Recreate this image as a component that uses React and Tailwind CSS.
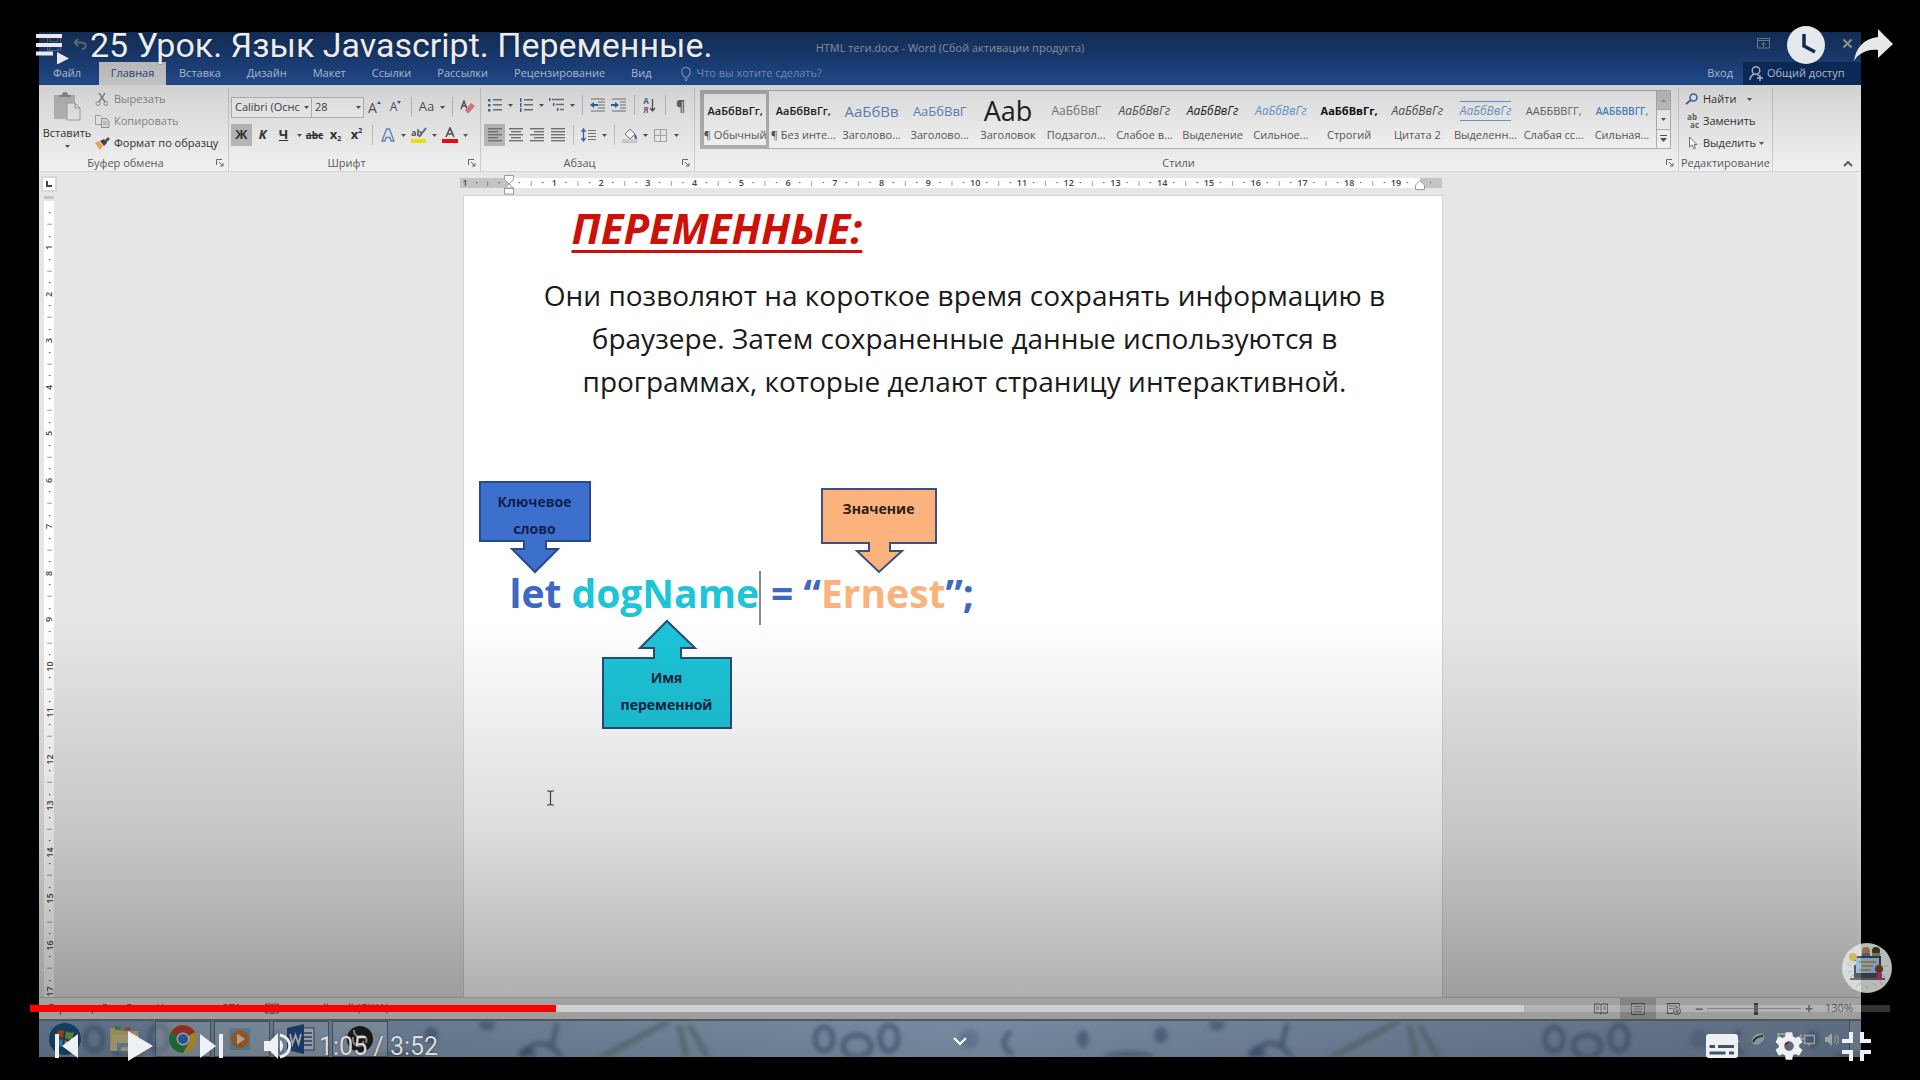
import React from "react";

const Svg = ({ w = 14, h = 14, vb, className = "", children }) => (
  <svg width={w} height={h} viewBox={vb || `0 0 ${w} ${h}`} className={`shrink-0 ${className}`} fill="none" aria-hidden="true">
    {children}
  </svg>
);

const Caret = () => (
  <span className="flex w-[10px] justify-center">
    <Svg w={5} h={3}><path d="M0 0h5L2.5 3z" fill="#555" /></Svg>
  </span>
);
const Sep = () => (
  <span className="flex w-[10px] justify-center">
    <span className="h-5 w-px bg-[#c6c6c6]" />
  </span>
);
const Tool = ({ label, active, children }) => (
  <button type="button" aria-label={label} className={`flex h-[22px] w-[21px] items-center justify-center ${active ? "bg-[#bdbdbd]" : ""}`}>
    {children}
  </button>
);

const Lines = ({ rows, color = "#777" }) => (
  <Svg w={14} h={14}>
    {rows.map(([x, w], i) => <rect key={i} x={x} y={i * 3} width={w} height="1.4" fill={color} />)}
  </Svg>
);

const Group = ({ label, className = "", launcher = true, children }) => (
  <section className={`flex flex-col border-r border-[#cfcfcf] ${className}`}>
    <div className="h-[67px]">{children}</div>
    <div className={`relative flex h-4 items-center justify-center text-[11px] leading-4 text-[#5a5a5a] ${launcher ? "pr-4" : ""}`}>
      {label}
      {launcher && (
        <button type="button" aria-label={`${label}: параметры`} className="absolute right-1 top-1">
          <Svg w={8} h={8}><path d="M.5 6V.5H6M3 3l4 4M7 4v3H4" stroke="#666" /></Svg>
        </button>
      )}
    </div>
  </section>
);

function Clipboard() {
  return (
    <Group label="Буфер обмена" className="w-[190px]">
      <div className="flex">
        <button type="button" className="flex w-[56px] flex-col items-center pt-1 text-[11px] leading-4 text-[#333]">
          <Svg w={28} h={30}>
            <rect x="1" y="3" width="21" height="24" fill="#bdbdbd" />
            <path d="M6 5V3h3a3 3 0 0 1 6 0h3v2z" fill="#8f8f8f" />
            <path d="M14 11h8l5 5v12H14z" fill="#f0f0f0" stroke="#a5a5a5" />
            <path d="M22 11v5h5" stroke="#a5a5a5" />
          </Svg>
          <span className="mt-[3px]">Вставить</span>
          <span className="mt-1"><Caret /></span>
        </button>
        <div className="flex flex-col text-[11px] leading-[22px]">
          <button type="button" className="flex h-[22px] items-center gap-1 text-[#8c8c8c]">
            <Svg w={15} h={13}><circle cx="3" cy="10.500" r="2" stroke="#999" /><circle cx="11" cy="10.500" r="2" stroke="#999" /><path d="M4 9L10 0M10 9L4 0" stroke="#888" strokeWidth="1.400" /></Svg>
            Вырезать
          </button>
          <button type="button" className="flex h-[22px] items-center gap-1 text-[#8c8c8c]">
            <Svg w={15} h={13}><path d="M.5.5h5l2 2v7h-7z" stroke="#aaa" /><path d="M6.500 3.500h5l2.500 2.500v6.500h-7.500z" fill="#e4e4e4" stroke="#999" /><path d="M8 7h4M8 9h4" stroke="#aaa" /></Svg>
            Копировать
          </button>
          <button type="button" className="flex h-[22px] items-center gap-1 text-[#333]">
            <Svg w={15} h={13}><path d="M0 6l4-2 4 5-3 4z" fill="#eda95c" /><path d="M5 4l4 5 3-3-3-4z" fill="#444" /><path d="M9 4l4-4 2 2-4 4z" fill="#555" /></Svg>
            Формат по образцу
          </button>
        </div>
      </div>
    </Group>
  );
}

function FontGroup() {
  return (
    <Group label="Шрифт" className="w-[252px]">
      <div className="flex flex-col pl-[2px] pt-2">
        <div className="flex h-[22px] items-center">
          <button type="button" className="flex h-[21px] w-[81px] items-center justify-between border border-[#bdbdbd] bg-white/50 pl-[3px] text-[11px] text-[#444]">
            Calibri (Оснс<Caret />
          </button>
          <button type="button" className="flex h-[21px] w-[52px] items-center justify-between border border-l-0 border-[#bdbdbd] bg-white/50 pl-[3px] text-[11px] text-[#444]">
            28<Caret />
          </button>
          <Tool label="Увеличить размер"><span className="text-[14px] text-[#555]">A</span><Svg w={4} h={14}><path d="M0 4L2 1l2 3z" fill="#3566a8" /></Svg></Tool>
          <Tool label="Уменьшить размер"><span className="text-[12px] text-[#555]">A</span><Svg w={4} h={14}><path d="M0 1L2 4l2-3z" fill="#3566a8" /></Svg></Tool>
          <Sep />
          <Tool label="Регистр"><span className="text-[13px] text-[#555]">Aa</span></Tool>
          <Caret />
          <Sep />
          <Tool label="Очистить формат">
            <Svg w={15} h={14}><path d="M1 9L4 1l3 8M2 6h4" stroke="#555" strokeWidth="1.400" /><path d="M5 10l6-7 4 3-6 7H7z" fill="#e0808f" /></Svg>
          </Tool>
        </div>
        <div className="mt-[6px] flex h-[22px] items-center text-[13px] text-[#333]">
          <Tool label="Полужирный" active><b>Ж</b></Tool>
          <Tool label="Курсив"><b className="italic">К</b></Tool>
          <Tool label="Подчеркнутый"><b className="underline">Ч</b></Tool>
          <Caret />
          <Tool label="Зачеркнутый"><b className="text-[10px] line-through">abc</b></Tool>
          <Tool label="Подстрочный"><b>x</b><b className="mt-2 text-[7px]">2</b></Tool>
          <Tool label="Надстрочный"><b>x</b><b className="mb-2 text-[7px]">2</b></Tool>
          <Sep />
          <Tool label="Эффекты">
            <Svg w={14} h={14}><path d="M1 13L5.500 1h3L13 13h-3L9 9.500H5L4 13z" fill="#e4edf8" stroke="#6488b8" strokeWidth="1.300" /></Svg>
          </Tool>
          <Caret />
          <Tool label="Цвет выделения">
            <Svg w={16} h={16}><text x="0" y="9" fontSize="9" fontWeight="700" fill="#555">ab</text><path d="M8 10l7-9" stroke="#67718c" strokeWidth="2" /><rect y="12" width="15" height="4" fill="#f3ea10" /></Svg>
          </Tool>
          <Caret />
          <Tool label="Цвет текста">
            <Svg w={16} h={16}><path d="M4 10L8 1l4 9M5.500 7h5" stroke="#555" strokeWidth="1.600" /><rect y="12" width="16" height="4" fill="#f20d0d" /></Svg>
          </Tool>
          <Caret />
        </div>
      </div>
    </Group>
  );
}

function ParagraphGroup() {
  const L = "#777";
  return (
    <Group label="Абзац" className="w-[214px]">
      <div className="flex flex-col pl-[3px] pt-[6px]">
        <div className="flex h-[22px] items-center">
          <Tool label="Маркеры"><Svg w={14} h={14}>{[1, 6, 11].map((y) => <g key={y}><rect y={y} width="2.500" height="2.500" fill="#3f69a8" /><rect x="5" y={y} width="9" height="1.500" fill={L} /></g>)}</Svg></Tool>
          <Caret />
          <Tool label="Нумерация"><Svg w={14} h={14}>{[1, 6, 11].map((y) => <g key={y}><rect x="1" y={y - 1} width="1.500" height="4" fill="#3f69a8" /><rect x="5" y={y} width="9" height="1.500" fill={L} /></g>)}</Svg></Tool>
          <Caret />
          <Tool label="Многоуровневый список"><Svg w={16} h={14}><path d="M.7 0v3M4.700 5v3M8.700 10v3" stroke="#3f69a8" strokeWidth="1.500" /><path d="M3 1.500h12M7 6.500h8M11 11.500h4" stroke={L} strokeWidth="1.500" /></Svg></Tool>
          <Caret />
          <Sep />
          <Tool label="Уменьшить отступ"><Svg w={16} h={14}><path d="M1 1h14M8 4h7M8 7h7M8 10h7M1 13h14" stroke={L} /><path d="M0 7l4-3v2h4v2H4v2z" fill="#2f66ab" /></Svg></Tool>
          <Tool label="Увеличить отступ"><Svg w={16} h={14}><path d="M1 1h14M9 4h6M9 7h6M9 10h6M1 13h14" stroke={L} /><path d="M8 7L4 4v2H0v2h4v2z" fill="#2f66ab" /></Svg></Tool>
          <Sep />
          <Tool label="Сортировка">
            <span className="flex flex-col text-[8px] font-bold leading-[9px]"><span className="text-[#3f69a8]">А</span><span className="text-[#8a5aa0]">Я</span></span>
            <Svg w={7} h={15}><path d="M3.500 1v12M1 10l2.500 3L6 10" stroke="#555" strokeWidth="1.300" /></Svg>
          </Tool>
          <Sep />
          <Tool label="Все знаки"><span className="text-[14px] font-bold text-[#666]">¶</span></Tool>
        </div>
        <div className="mt-2 flex h-[22px] items-center">
          <Tool label="По левому краю" active><Lines rows={[[0, 14], [0, 10], [0, 14], [0, 10], [0, 14]]} /></Tool>
          <Tool label="По центру"><Lines rows={[[0, 14], [2, 10], [0, 14], [2, 10], [0, 14]]} /></Tool>
          <Tool label="По правому краю"><Lines rows={[[0, 14], [4, 10], [0, 14], [4, 10], [0, 14]]} /></Tool>
          <Tool label="По ширине"><Lines rows={[[0, 14], [0, 14], [0, 14], [0, 14], [0, 14]]} /></Tool>
          <Sep />
          <Tool label="Интервал"><Svg w={15} h={14}><path d="M2.500 1v12M.5 4l2-3 2 3M.5 10l2 3 2-3" stroke="#2f66ab" strokeWidth="1.300" /><path d="M7 2.500h8M7 5.500h8M7 8.500h8M7 11.500h8" stroke={L} /></Svg></Tool>
          <Caret />
          <Sep />
          <Tool label="Заливка"><Svg w={16} h={15}><path d="M3 6l5-5 5 5-5 5z" fill="#fff" stroke="#777" /><path d="M13 6c2 2 3 5 1 5s-2-3-1-5z" fill="#3f69a8" /><rect x="0" y="12" width="15" height="2.500" fill="#ddd" stroke="#aaa" strokeWidth=".6" /></Svg></Tool>
          <Caret />
          <Tool label="Границы"><Svg w={13} h={13}><path d="M.5.5h12v12H.5zM6.500.5v12M.5 6.500h12" stroke="#aaa" /></Svg></Tool>
          <Caret />
        </div>
      </div>
    </Group>
  );
}

const STYLES = [
  ["АаБбВвГг,", "¶ Обычный", "text-[11px] text-[#222] font-semibold"],
  ["АаБбВвГг,", "¶ Без инте...", "text-[11px] text-[#222] font-semibold"],
  ["АаБбВв", "Заголово...", "text-[15px] text-[#5f8bbd]"],
  ["АаБбВвГ", "Заголово...", "text-[13px] text-[#5f8bbd]"],
  ["Aab", "Заголовок", "text-[27px] text-[#222]"],
  ["АаБбВвГ", "Подзагол...", "text-[12px] text-[#7c7c7c]"],
  ["АаБбВвГг", "Слабое в...", "text-[12px] text-[#555] italic"],
  ["АаБбВвГг", "Выделение", "text-[12px] text-[#222] italic"],
  ["АаБбВвГг", "Сильное...", "text-[12px] text-[#6c9fd6] italic"],
  ["АаБбВвГг,", "Строгий", "text-[11px] text-[#111] font-bold"],
  ["АаБбВвГг", "Цитата 2", "text-[12px] text-[#555] italic"],
  ["АаБбВвГг", "Выделенн...", "text-[12px] text-[#6c9fd6] italic border-y border-[#6c9fd6]"],
  ["ААББВВГГ,", "Слабая сс...", "text-[11px] text-[#666]"],
  ["ААББВВГГ,", "Сильная...", "text-[10px] text-[#4d8ad0] font-semibold"],
];

function StylesGroup() {
  return (
    <Group label="Стили" className="min-w-0 flex-1">
      <div className="flex h-[61px] pl-[5px] pr-[7px] pt-[2px]">
        <div className="flex min-w-0 flex-1 border border-[#b4b4b4] bg-white/45">
          {STYLES.map(([sample, name, cls], i) => (
            <button key={i} type="button" className={`flex min-w-0 flex-1 flex-col items-center overflow-hidden ${i === 0 ? "outline-3 -outline-offset-3 outline-[#b3b3b3]" : ""}`}>
              <span className="flex h-9 items-center pt-1">
                <span className={`whitespace-nowrap leading-[18px] ${cls}`}>{sample}</span>
              </span>
              <span className="whitespace-nowrap text-[11px] leading-4 text-[#5a5a5a]">{name}</span>
            </button>
          ))}
        </div>
        <div className="flex w-[14px] flex-col border border-l-0 border-[#b4b4b4]">
          <button type="button" aria-label="Вверх" className="flex flex-1 items-center justify-center bg-[#c8c8c8]"><Svg w={5} h={3}><path d="M0 3h5L2.500 0z" fill="#999" /></Svg></button>
          <button type="button" aria-label="Вниз" className="flex flex-1 items-center justify-center border-y border-[#b4b4b4] bg-white/60"><Svg w={5} h={3}><path d="M0 0h5L2.500 3z" fill="#555" /></Svg></button>
          <button type="button" aria-label="Все стили" className="flex flex-1 items-center justify-center bg-white/60"><Svg w={7} h={7}><path d="M0 .5h7" stroke="#555" /><path d="M0 3h7L3.500 7z" fill="#555" /></Svg></button>
        </div>
      </div>
    </Group>
  );
}

function EditingGroup() {
  return (
    <Group label="Редактирование" className="w-[94px]" launcher={false}>
      <div className="flex flex-col pl-[6px] text-[11px] text-[#333]">
        <button type="button" className="flex h-[22px] items-center gap-1">
          <Svg w={14} h={12}><circle cx="8.500" cy="4.500" r="3.500" stroke="#4a6da5" strokeWidth="1.600" /><path d="M6 7l-5 4" stroke="#4a6da5" strokeWidth="2" /></Svg>
          Найти<span className="ml-1"><Caret /></span>
        </button>
        <button type="button" className="flex h-[22px] items-center gap-1">
          <span className="flex w-[14px] flex-col text-[8px] font-bold leading-[8px] text-[#666]">
            <span>ab</span>
            <span className="self-end">ac</span>
          </span>
          Заменить
        </button>
        <button type="button" className="flex h-[22px] items-center gap-1">
          <Svg w={14} h={14}><path d="M4.500 1v10l2.500-2 2 4 1.500-1-1.500-3.500h3z" fill="#fff" stroke="#777" /></Svg>
          <span className="flex items-center">Выделить<Caret /></span>
        </button>
      </div>
    </Group>
  );
}

const TABS = ["Вставка", "Дизайн", "Макет", "Ссылки", "Рассылки", "Рецензирование", "Вид"];

function WordHeader() {
  return (
    <header className="bg-linear-to-b from-[#18396d] to-[#25549f] text-[11px]">
      <div className="relative flex h-[30px] items-center justify-between pl-2 pr-2">
        <div className="flex items-center gap-3 pb-[6px] text-[#7b8597]">
          <Svg w={14} h={14}><path d="M.5.5h13v13H.5zM3 .5v4h8v-4M3 13V8h8v5" stroke="#68758c" /></Svg>
          <Svg w={14} h={12}><path d="M5 1L1.500 4.500 5 8M2 4.500h6c6 0 6 6 1 6.500" stroke="#7b8597" strokeWidth="1.800" /></Svg>
        </div>
        <h1 className="absolute inset-x-0 top-2 text-center leading-4 text-[#a9b3c4]">HTML теги.docx - Word (Сбой активации продукта)</h1>
        <div className="flex items-center pb-2">
          <button type="button" aria-label="Параметры ленты" className="mr-[72px]"><Svg w={13} h={11}><path d="M.5.5h12v9.500H.5zM.5 2.500h12M6.500 9V5M4.500 6.500l2-2 2 2" stroke="#8b97ab" /></Svg></button>
          <button type="button" aria-label="Закрыть"><Svg w={11} h={11}><path d="M1.500 1.500l8 8m0-8l-8 8" stroke="#b9b8af" strokeWidth="2" /></Svg></button>
        </div>
      </div>
      <nav className="flex h-[23px] items-center text-[#ccd8ea]">
        <button type="button" className="w-[60px] pr-1 text-center">Файл</button>
        <button type="button" className="flex h-full w-[67px] items-center justify-center bg-[#e0e0e0] text-[#2c4f8c]">Главная</button>
        {TABS.map((t) => <button key={t} type="button" className="px-[13px]">{t}</button>)}
        <label className="ml-4 flex items-center gap-[6px] text-[#7d9ccb]">
          <Svg w={10} h={14}><path d="M3 10C3 8 .7 7.500.7 4.800a4.300 4.300 0 0 1 8.600 0C9.300 7.500 7 8 7 10zM3 12h4M4 13.500h2" stroke="#8ba6cf" strokeWidth="1.200" /></Svg>
          <input type="text" placeholder="Что вы хотите сделать?" className="w-[140px] bg-transparent outline-none placeholder:text-[#86a3cf]" />
        </label>
        <div className="ml-auto flex h-full items-center">
          <button type="button" className="px-[10px]">Вход</button>
          <button type="button" className="flex h-full w-[118px] items-center gap-1 bg-[#0e3066] pl-[6px]">
            <Svg w={14} h={15}><circle cx="7" cy="4.500" r="3.800" stroke="#c7d3e6" strokeWidth="1.400" /><path d="M1 14c0-3 2-5 4-6M8 8l2 2M11 9v6M8 12h6" stroke="#c7d3e6" strokeWidth="1.400" /></Svg>
            Общий доступ
          </button>
        </div>
      </nav>
    </header>
  );
}

const quarterMarks = (n) => Array.from({ length: n }, (_, i) => {
  const k = i + 1;
  return k % 4 === 0 ? String(k / 4) : k % 2 === 0 ? "|" : "·";
});

const Mark = ({ children }) => (
  <span className={`flex w-0 flex-1 items-center justify-center font-semibold leading-[10px] ${children === "|" ? "text-[6px]" : "text-[9px]"}`}>{children}</span>
);

function HorizontalRuler() {
  return (
    <div className="flex h-[10px] text-[#444]">
      <div className="flex w-[49px] bg-[#c4c4c4] pr-1">{["1", "·", "|", "·"].map((m, i) => <Mark key={i}>{m}</Mark>)}</div>
      <div className="relative w-[5px] bg-white">
        <Svg w={10} h={20} className="absolute -left-[5px] -top-[3px]">
          <path d="M.5.5h9v4L5 9 .5 4.500zM5 9l4.500 4H.5z" fill="#fff" stroke="#999" /><rect x=".5" y="13.500" width="9" height="5.500" fill="#fff" stroke="#999" />
        </Svg>
      </div>
      <div className="flex flex-1 bg-white">{quarterMarks(77).map((m, i) => <Mark key={i}>{m}</Mark>)}</div>
      <div className="w-[6px] bg-white" />
      <div className="relative flex w-[22px] items-center justify-center bg-[#c4c4c4] text-[9px] leading-[10px]">
        ·
        <Svg w={10} h={10} className="absolute -left-[5px] top-[2px]"><path d="M5 .7L9.500 5v4.500h-9V5z" fill="#fff" stroke="#999" /></Svg>
      </div>
    </div>
  );
}

function VerticalRuler() {
  return (
    <div className="flex w-[20px] flex-col items-center pt-1">
      <div className="flex size-4 shrink-0 items-center justify-center border-2 border-[#d8d8d8] bg-white">
        <Svg w={6} h={6}><path d="M1 0v5h5" stroke="#444" strokeWidth="2" /></Svg>
      </div>
      <div className="mt-1 h-[3px] w-[10px] shrink-0 bg-[#c4c4c4]" />
      <div className="mt-[2px] flex w-[10px] flex-1 flex-col bg-white pt-[6px] text-[#444]">
        {quarterMarks(68).map((m, i) => (
          <span key={i} className={`flex h-0 flex-1 items-center justify-center font-semibold ${m === "|" ? "text-[6px]" : "text-[9px]"}`}>
            <span className="-rotate-90 leading-none">{m}</span>
          </span>
        ))}
      </div>
    </div>
  );
}

function DocumentPage() {
  return (
    <article className="relative mt-2 flex-1 bg-white outline outline-[#d4d4d4]">
      <h2 className="ml-[108px] pt-[6px] text-[42px] font-bold italic leading-[52px] text-[#cc1208] underline decoration-[3px] underline-offset-[6px]">ПЕРЕМЕННЫЕ:</h2>
      <p className="ml-[24px] mt-5 text-center text-[28px] font-medium leading-[43px] text-[#1a1a1a]">
        Они позволяют на короткое время сохранять информацию в<br />
        браузере. Затем сохраненные данные используются в<br />
        программах, которые делают страницу интерактивной.
      </p>
      <p className="ml-[46px] mt-[162px] whitespace-pre text-[39px] font-bold leading-[56px] text-[#3d68c4]">
        let <span className="text-[#1cc5d8]">dogName</span><span className="inline-block h-[54px] w-[2px] bg-[#888] align-middle" /> = “<span className="text-[#fbb27c]">Ernest</span>”;
      </p>

      <div className="absolute left-[14px] top-[284px] h-[94px] w-[114px] text-center text-[14px] font-bold leading-[27px] text-[#10204c]">
        <Svg w={114} h={94} className="absolute inset-0"><path d="M2 2h110v59H68v8h12L57 92 34 69h12v-8H2z" fill="#3d70cc" stroke="#284a8c" strokeWidth="2" /></Svg>
        <span className="relative block pt-2">Ключевое<br />слово</span>
      </div>
      <div className="absolute left-[356px] top-[291px] h-[87px] w-[118px] text-center text-[14px] font-bold leading-[27px] text-[#2b1d1a]">
        <Svg w={118} h={87} className="absolute inset-0"><path d="M2 2h114v54H70v8h12L59 85 37 64h12v-8H2z" fill="#fbb27c" stroke="#3c4f80" strokeWidth="2" /></Svg>
        <span className="relative block pt-2">Значение</span>
      </div>
      <div className="absolute left-[137px] top-[423px] h-[112px] w-[132px] text-center text-[14px] font-bold leading-[27px] text-[#0e2340]">
        <Svg w={132} h={112} className="absolute inset-0"><path d="M2 39h51V29H39L66 2l28 27H80v10h50v70H2z" fill="#1cc5d8" stroke="#284a7c" strokeWidth="2" /></Svg>
        <span className="relative block pt-[45px]">Имя<br />переменной</span>
      </div>
      <Svg w={9} h={16} className="absolute left-[82px] top-[594px]"><path d="M1 1h2.500l1 1 1-1H8M1 15h2.500l1-1 1 1H8M4.500 2v12" stroke="#444" strokeWidth="1.200" /></Svg>
    </article>
  );
}

function StatusBar() {
  return (
    <footer className="flex h-[22px] items-center border-t border-[#c4c4c4] bg-[#ededed] pl-2 pr-2 text-[11px] text-[#555]">
      <span>Страница 5 из 5</span>
      <span className="ml-6">Число слов: 271</span>
      <Svg w={14} h={12} className="ml-6"><path d="M.5 1h5l1.500 1 1.500-1h5v9h-5L7 11l-1.500-1h-5zM7 2v9" stroke="#666" /></Svg>
      <span className="ml-3">английский (США)</span>
      <div className="ml-auto flex h-full items-center">
        <span className="flex w-[38px] justify-center"><Svg w={14} h={12}><path d="M.5 1h5l1.500 1 1.500-1h5v9h-5L7 11l-1.500-1h-5zM7 2v9M2 4h3M2 6h3M9 4h3M9 6h3" stroke="#666" /></Svg></span>
        <span className="flex h-full w-9 items-center justify-center bg-[#c2c2c2]"><Svg w={14} h={12}><path d="M.5.5h13v11H.5zM3 3.500h8M3 6h8M3 8.500h8" stroke="#666" /></Svg></span>
        <span className="flex w-[35px] justify-center"><Svg w={14} h={12}><path d="M6 10.500H.5V.5h12V4M2 3h8M2 5.500h4" stroke="#666" /><circle cx="10" cy="8" r="3.500" stroke="#555" /><path d="M8 8h4M10 6v4" stroke="#555" /></Svg></span>
        <span className="w-4 text-center text-[14px] font-bold">−</span>
        <input type="range" aria-label="Масштаб" min="10" max="250" defaultValue="136" className="h-3 w-[94px] appearance-none bg-[linear-gradient(#999,#999)] bg-[length:100%_1px] bg-center bg-no-repeat [&::-webkit-slider-thumb]:h-3 [&::-webkit-slider-thumb]:w-1 [&::-webkit-slider-thumb]:appearance-none [&::-webkit-slider-thumb]:bg-[#555]" />
        <span className="w-4 text-center text-[14px] font-bold">+</span>
        <span className="ml-2">130%</span>
      </div>
    </footer>
  );
}

const Task = ({ label, open, children }) => (
  <button type="button" aria-label={label} className={`relative flex h-full items-center justify-center ${open ? "w-[56px] border border-[#63758b] bg-white/30" : "w-[57px]"}`}>
    {children}
  </button>
);

function Taskbar() {
  return (
    <div className="relative flex h-[38px] items-center overflow-hidden border-t-2 border-[#7d838a] bg-linear-to-r from-[#8ba8c8] via-[#b4d2f5] to-[#8ba4c4]">
      <svg className="absolute inset-0 size-full blur-[2px]" aria-hidden="true">
        <defs>
          <pattern id="doodle" width="730" height="38" patternUnits="userSpaceOnUse">
            <g fill="none" stroke="#49698f" strokeWidth="5" opacity=".6" strokeLinecap="round">
              <ellipse cx="55" cy="18" rx="9" ry="12" /><ellipse cx="88" cy="25" rx="14" ry="11" /><ellipse cx="120" cy="17" rx="9" ry="13" />
              <path d="M240 12c-6 6-8 14 2 20M484 34c10-14 20-14 28-8l6-22M514 26l10 12" />
            </g>
            <g fill="none" stroke="#6c8d8c" strokeWidth="6" opacity=".6"><path d="M560 38l70-38M650 4l20 34M640 4l8 34" /></g>
            <g fill="#49698f" opacity=".55"><ellipse cx="314" cy="18" rx="6" ry="9" /><ellipse cx="392" cy="14" rx="7" ry="8" /><ellipse cx="360" cy="36" rx="26" ry="6" /><circle cx="200" cy="18" r="10" opacity=".5" /><circle cx="488" cy="34" r="9" /><circle cx="448" cy="2" r="8" /></g>
          </pattern>
        </defs>
        <rect width="100%" height="100%" fill="url(#doodle)" />
      </svg>
      <Task label="Пуск">
        <Svg w={34} h={34} className="ml-[-6px]"><circle cx="17" cy="17" r="16.500" fill="#235d91" stroke="#8db0d0" /><path d="M9 10c3-2 5-2 7-1l-1 7c-2-1-5-1-7 1z" fill="#e7622e" /><path d="M18 9c3 2 5 2 8 1l-2 7c-2 1-5 0-7-1z" fill="#8fc545" /><path d="M8 19c2-2 5-2 7-1l-1 7c-2-1-5-1-7 1z" fill="#57a9e0" /><path d="M17 18c2 2 5 2 7 1l-2 7c-2 1-5 0-6-1z" fill="#f7cf45" /></Svg>
      </Task>
      <Task label="Проводник">
        <Svg w={32} h={28}><path d="M1 3h10l2 3h16v20H1z" fill="#e8d48a" /><path d="M6 1h6v4H6z" fill="#5cab52" /><path d="M16 2h5v4h-5z" fill="#d86c4d" /><path d="M3 10h27l-3 16H1z" fill="#f3e3a4" /><path d="M8 18h18v8h-4v-4H12v4H8z" fill="#84b8dd" /></Svg>
      </Task>
      <div className="relative ml-[2px] flex h-full gap-[3px]">
        <Task label="Chrome" open>
          <Svg w={28} h={28}><circle cx="14" cy="14" r="14" fill="#f6c944" /><path d="M14 14L1.900 7A14 14 0 0 1 26.100 7z" fill="#d94636" /><path d="M1.900 7A14 14 0 0 0 14 28l6-10.500-6-3.500z" fill="#2f9e57" /><circle cx="14" cy="14" r="6.500" fill="#fff" /><circle cx="14" cy="14" r="5" fill="#3f7de0" /></Svg>
        </Task>
        <Task label="Проигрыватель" open>
          <Svg w={26} h={26}><rect x="6" y="1" width="18" height="22" fill="#a9cfe6" /><rect x="1" y="2" width="20" height="22" fill="#7fb6d8" /><circle cx="11" cy="13" r="9" fill="#e9822b" /><path d="M8 7.500l8 5.500-8 5.500z" fill="#fff" /></Svg>
        </Task>
        <Task label="Word" open>
          <Svg w={30} h={30}><rect x="14" y="4" width="14" height="22" fill="#eef2f8" stroke="#3a5ea0" /><path d="M18 9h8M18 13h8M18 17h8M18 21h8" stroke="#3a5ea0" strokeWidth="1.500" /><path d="M1 4l17-4v30L1 26z" fill="#2a56a0" /><path d="M4 10l2.500 10 3-9 3 9L15 10" stroke="#fff" strokeWidth="1.800" /></Svg>
        </Task>
        <Task label="OBS" open>
          <Svg w={28} h={28}><circle cx="14" cy="14" r="13" fill="#262628" /><path d="M8 5c0 5 3 7 6 6 4-1 8 2 6 7M9 20c5 3 9 0 8-4M7 12c-1 5 1 8 5 8" stroke="#c9ccd1" strokeWidth="2" /></Svg>
        </Task>
      </div>
      <div className="relative ml-auto flex h-full items-center gap-[10px] text-[11px] text-white">
        <span>EN</span>
        <Svg w={8} h={5}><path d="M0 5l4-4 4 4z" fill="#fff" /></Svg>
        <Svg w={16} h={14}><ellipse cx="8" cy="7" rx="7" ry="5" transform="rotate(-35 8 7)" fill="#dfe5ea" /><path d="M3 10c2-4 6-6 10-6" stroke="#3c4a58" strokeWidth="2" /></Svg>
        <Svg w={14} h={14}><path d="M2 13V1M2 2h10v7H2" stroke="#fff" strokeWidth="1.500" /><circle cx="9" cy="9" r="4" fill="#d03a2c" /></Svg>
        <Svg w={15} h={13}><path d="M4.500 2.500h10v8h-10zM1 1v5h3M9 11v2" stroke="#fff" strokeWidth="1.400" /></Svg>
        <Svg w={14} h={13}><path d="M0 4h3l4-4v13L3 9H0z" fill="#fff" /><path d="M9 3c2 2 2 5 0 7M11 1c3 3 3 8 0 11" stroke="#fff" /></Svg>
        <span className="h-full w-3 border-l border-[#63758b] bg-white/20" />
      </div>
    </div>
  );
}

function WordRecording() {
  return (
    <main className="relative flex min-h-0 flex-1 flex-col overflow-hidden bg-[#e6e6e6] font-['Open_Sans','Noto_Sans',sans-serif]">
      <WordHeader />
      <div className="flex h-[87px] border-b border-[#d4d4d4] bg-[#f1f1f1] pt-[3px]">
        <Clipboard />
        <FontGroup />
        <ParagraphGroup />
        <StylesGroup />
        <EditingGroup />
        <div className="flex w-[88px] items-end justify-end pb-1 pr-2">
          <button type="button" aria-label="Свернуть ленту"><Svg w={10} h={7}><path d="M1 6l4-4 4 4" stroke="#555" strokeWidth="1.800" /></Svg></button>
        </div>
      </div>
      <div className="flex min-h-0 flex-1">
        <VerticalRuler />
        <div className="flex min-w-0 flex-1 justify-center">
          <div className="-ml-2 flex w-[982px] flex-col pt-[6px]">
            <HorizontalRuler />
            <div className="flex flex-1 flex-col pl-1"><DocumentPage /></div>
          </div>
        </div>
        <div className="w-[7px]" />
        <div className="w-1 bg-[#ececec]" />
      </div>
      <StatusBar />
      <Taskbar />
      <div className="pointer-events-none absolute inset-x-0 top-0 h-[140px] bg-linear-to-b from-black/25 via-black/10 to-transparent" />
      <div className="pointer-events-none absolute inset-x-0 bottom-0 h-[440px] bg-linear-to-t from-black/38 via-black/14 to-transparent" />
    </main>
  );
}

function PlayerTop() {
  return (
    <div className="absolute inset-x-0 top-[25px] flex items-center pl-[36px] pr-[27px]">
      <button type="button" aria-label="Плейлист">
        <Svg w={34} h={34} className="mt-1"><path d="M0 6h26M0 15h26M0 23.500h17" stroke="#e9e9ee" strokeWidth="4" /><path d="M21 22l12 6.500-12 6z" fill="#e9e9ee" /></Svg>
      </button>
      <a href="#video" className="ml-5 text-[34px] leading-[40px] text-[#ececec] [text-shadow:0_0_2px_rgba(0,0,0,.5)]">25 Урок. Язык Javascript. Переменные.</a>
      <div className="ml-auto flex items-center gap-[29px]">
        <button type="button" aria-label="Смотреть позже"><Svg w={38} h={38}><circle cx="19" cy="19" r="19" fill="#e6e8ec" /><path d="M17 8v12l11 6" stroke="#0f2a52" strokeWidth="3.500" /></Svg></button>
        <button type="button" aria-label="Поделиться"><Svg w={39} h={32}><path d="M24 0l15 15-15 14v-8C13 20 5 24 0 32 2 19 9 10 24 8z" fill="#e8e8e8" /></Svg></button>
      </div>
    </div>
  );
}

const Ico = "#eef0f3";

function PlayerBottom() {
  return (
    <div className="absolute inset-x-[30px] bottom-[14px] flex flex-col">
      <button type="button" aria-label="Канал" className="mb-3 -mr-[2px] size-[50px] self-end overflow-hidden rounded-full opacity-80">
        <Svg w={50} h={50}>
          <rect width="50" height="50" fill="#e6ebe6" />
          <g stroke="#9bbfa6" opacity=".8"><path d="M5 20l4 3M8 34l5-3M14 44l3-4M24 42l2 4M34 44l-3-4M43 34l-4-2M46 22l-4 2M40 10l-3 3M10 28l-4 1M20 39l-3 3M38 38l2 4" /></g>
          <rect x="13" y="14" width="25" height="17" fill="#9dc5ec" stroke="#3c4660" strokeWidth="2" />
          <path d="M17 19h17M20 23h11M17 27h12" stroke="#b49455" strokeWidth="2" />
          <rect x="12" y="31" width="27" height="4" fill="#4c4a52" /><path d="M8 36h35" stroke="#6e6470" strokeWidth="2" />
          <circle cx="24" cy="8" r="4" fill="#c78646" /><path d="M20 13h8v-3h-8z" fill="#5c75b0" />
          <circle cx="34" cy="8" r="4" fill="#4c3a32" /><path d="M30 13h8v-3h-8z" fill="#7f9e55" />
          <circle cx="11" cy="14" r="4" fill="#e3bb4c" /><path d="M7 22v-4h7v4z" fill="#dfe3e8" />
          <circle cx="37" cy="26" r="4" fill="#7c3c2c" /><path d="M34 36l2-6h4v6z" fill="#c93572" />
        </Svg>
      </button>
      <input
        type="range"
        aria-label="Позиция воспроизведения"
        min="0"
        max="232"
        defaultValue="65"
        className="h-[7px] w-full appearance-none bg-[linear-gradient(to_right,#f00_28.3%,rgba(255,255,255,.5)_28.3%_80.3%,rgba(255,255,255,.2)_80.3%)] [&::-webkit-slider-thumb]:size-0 [&::-webkit-slider-thumb]:appearance-none"
      />
      <div className="relative mt-[14px] flex h-10 items-center">
        <button type="button" aria-label="Предыдущее" className="ml-[25px]"><Svg w={23} h={24}><path d="M0 0h4v24H0zM23 0v24L7 12z" fill={Ico} /></Svg></button>
        <button type="button" aria-label="Воспроизвести" className="ml-[50px]"><Svg w={25} h={30}><path d="M0 0l25 15L0 30z" fill={Ico} /></Svg></button>
        <button type="button" aria-label="Следующее" className="ml-[47px]"><Svg w={23} h={24}><path d="M0 0l16 12L0 24zM19 0h4v24h-4z" fill={Ico} /></Svg></button>
        <button type="button" aria-label="Громкость" className="ml-[41px]"><Svg w={28} h={26}><path d="M0 8h6l8-8v26l-8-8H0z" fill={Ico} /><path d="M16 7c4 2.500 4 9 0 12z" fill={Ico} /><path d="M16 2c13 3 13 19 0 22" stroke={Ico} strokeWidth="3" /></Svg></button>
        <span className="ml-[27px] mt-[2px] text-[25px] leading-10 text-[#dcdcdc] [text-shadow:0_0_2px_rgba(0,0,0,.5)]">1:05 / 3:52</span>
        <button type="button" aria-label="Ещё видео" className="absolute left-1/2 top-[11px] -ml-[7px]"><Svg w={14} h={9}><path d="M1 1l6 6 6-6" stroke="#fff" strokeWidth="2.200" /></Svg></button>
        <div className="ml-auto flex items-center pr-[19px]">
          <button type="button" aria-label="Субтитры"><Svg w={32} h={24}><rect width="32" height="24" rx="3" fill={Ico} /><path d="M3.500 12.500h5.500M12 12.500h16M3.500 19h16M23 19h5" stroke="#415366" strokeWidth="3" /></Svg></button>
          <button type="button" aria-label="Настройки" className="ml-[36px]">
            <Svg w={30} h={30} vb="1 1 22 22"><path fill={Ico} d="M19.430 12.980c.04-.32.07-.64.07-.98s-.03-.66-.07-.98l2.110-1.650c.19-.15.24-.42.12-.64l-2-3.460c-.12-.22-.39-.3-.61-.22l-2.490 1c-.52-.4-1.080-.73-1.690-.98l-.38-2.650C14.460 2.180 14.250 2 14 2h-4c-.25 0-.46.18-.49.42l-.38 2.650c-.61.25-1.170.59-1.690.98l-2.490-1c-.23-.09-.49 0-.61.22l-2 3.460c-.13.22-.07.49.12.64l2.110 1.650c-.04.32-.07.65-.07.98s.03.66.07.98l-2.110 1.650c-.19.15-.24.42-.12.64l2 3.460c.12.22.39.3.61.22l2.490-1c.52.4 1.080.73 1.690.98l.38 2.650c.03.24.24.42.49.42h4c.25 0 .46-.18.49-.42l.38-2.650c.61-.25 1.170-.59 1.690-.98l2.490 1c.23.09.49 0 .61-.22l2-3.460c.12-.22.07-.49-.12-.64l-2.110-1.650zM12 15.500c-1.930 0-3.500-1.570-3.500-3.500s1.570-3.500 3.500-3.500 3.500 1.570 3.500 3.500-1.570 3.500-3.500 3.500z" /></Svg>
          </button>
          <button type="button" aria-label="Выйти из полноэкранного режима" className="ml-[38px]"><Svg w={29} h={29}><path d="M0 9h9V0M20 0v9h9M0 20h9v9M20 29v-9h9" stroke={Ico} strokeWidth="4" /></Svg></button>
        </div>
      </div>
    </div>
  );
}

export default function App() {
  return (
    <div className="relative flex h-screen flex-col overflow-hidden bg-black pb-[23px] pl-[39px] pr-[59px] pt-8 font-[Roboto,sans-serif]">
      <WordRecording />
      <PlayerTop />
      <PlayerBottom />
    </div>
  );
}
